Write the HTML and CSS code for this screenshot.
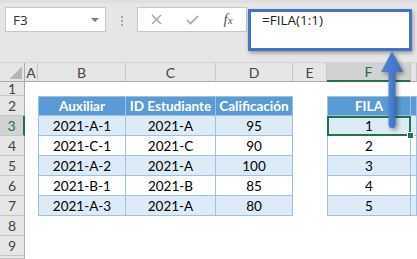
FILE: index.html
```html
<!DOCTYPE html>
<html lang="es">
<head>
    <meta charset="UTF-8">
    <title>FILA - Excel</title>
    <link rel="stylesheet" href="styles.css">
</head>
<body>
    <div class="app">
        <div class="toolbar">
            <div class="namebox"><span>F3</span><span class="caret"></span></div>
            <div class="grip"><i></i><i></i><i></i></div>
            <div class="fbuttons">
                <span class="slot">
                    <svg width="11" height="11" viewBox="0 0 11 11"><path d="M1 1L10 10M10 1L1 10" stroke="#a3a3a3" stroke-width="1.3" fill="none"/></svg>
                </span>
                <span class="slot">
                    <svg width="13" height="10" viewBox="0 0 13 10"><path d="M1 5L4.5 8.5L12 1" stroke="#a3a3a3" stroke-width="1.6" fill="none"/></svg>
                </span>
                <span class="slot fx">f<small>x</small></span>
            </div>
            <div class="formula">=FILA(1:1)</div>
        </div>

        <div class="sheet">
            <!-- encabezados de columna -->
            <div class="corner"><span></span></div>
            <div class="ch">A</div>
            <div class="ch">B</div>
            <div class="ch">C</div>
            <div class="ch">D</div>
            <div class="ch">E</div>
            <div class="ch sel">F</div>
            <div class="ch"></div>

            <div class="rh">1</div>
            <div></div><div></div><div></div><div></div><div></div><div></div><div></div>

            <div class="rh">2</div>
            <div></div>
            <div class="t th first">Auxiliar</div>
            <div class="t th">ID Estudiante</div>
            <div class="t th">Calificación</div>
            <div></div>
            <div class="t th first">FILA</div>
            <div class="t th"></div>

            <div class="rh sel">3</div>
            <div></div>
            <div class="t band first">2021-A-1</div>
            <div class="t band">2021-A</div>
            <div class="t band">95</div>
            <div></div>
            <div class="t band first active">1</div>
            <div class="t band"></div>

            <div class="rh">4</div>
            <div></div>
            <div class="t first">2021-C-1</div>
            <div class="t">2021-C</div>
            <div class="t">90</div>
            <div></div>
            <div class="t first">2</div>
            <div class="t"></div>

            <div class="rh">5</div>
            <div></div>
            <div class="t band first">2021-A-2</div>
            <div class="t band">2021-A</div>
            <div class="t band">100</div>
            <div></div>
            <div class="t band first">3</div>
            <div class="t band"></div>

            <div class="rh">6</div>
            <div></div>
            <div class="t first">2021-B-1</div>
            <div class="t">2021-B</div>
            <div class="t">85</div>
            <div></div>
            <div class="t first">4</div>
            <div class="t"></div>

            <div class="rh">7</div>
            <div></div>
            <div class="t band first">2021-A-3</div>
            <div class="t band">2021-A</div>
            <div class="t band">80</div>
            <div></div>
            <div class="t band first">5</div>
            <div class="t band"></div>

            <div class="rh">8</div>
            <div></div><div></div><div></div><div></div><div></div><div></div><div></div>

            <div class="rh">9</div>
            <div></div><div></div><div></div><div></div><div></div><div></div><div></div>

            <div class="rh"></div>
            <div></div><div></div><div></div><div></div><div></div><div></div><div></div>
        </div>

        <!-- flecha de F3 a la barra de fórmulas -->
        <svg class="arrow" width="32" height="86" viewBox="0 0 32 86">
            <defs>
                <linearGradient id="g" x1="0" x2="1">
                    <stop offset="0" stop-color="#4f86d6"/>
                    <stop offset="1" stop-color="#3f6ec2"/>
                </linearGradient>
            </defs>
            <rect x="12.5" y="20" width="7" height="60" rx="3.5" fill="url(#g)"/>
            <polygon points="16,3 5,24 27,24" fill="url(#g)"/>
        </svg>
    </div>
</body>
</html>
```

FILE: styles.css
```css
body {
    margin: 0;
    width: 417px;
    height: 259px;
    overflow: hidden;
    background-color: #fff;
    font-family: Lato, "Liberation Sans", sans-serif;
}

.app {
    position: relative;
}

/* barra superior */
.toolbar {
    display: flex;
    align-items: flex-start;
    height: 63px;
    box-sizing: border-box;
    padding: 4px 0 0 5px;
    background-color: #e6e6e6;
    border-top: 3px solid #dedede;
    border-bottom: 1px solid #d4d4d4;
    font-family: "Open Sans", sans-serif;
}

.namebox {
    width: 101px;
    height: 25px;
    box-sizing: border-box;
    display: flex;
    align-items: center;
    justify-content: space-between;
    padding: 0 6px 0 7px;
    background-color: #fff;
    border: 1px solid #c6c6c6;
    font-size: 13.5px;
    color: #333;
}

.caret {
    border-left: 4px solid transparent;
    border-right: 4px solid transparent;
    border-top: 4px solid #777;
}

.grip {
    width: 31px;
    display: flex;
    flex-direction: column;
    align-items: center;
    gap: 2px;
    padding-top: 9px;
}

.grip i {
    display: block;
    width: 2px;
    height: 2px;
    background-color: #a6a6a6;
}

.fbuttons {
    width: 110px;
    height: 25px;
    box-sizing: border-box;
    display: flex;
    align-items: center;
    background-color: #fff;
    border: 1px solid #c6c6c6;
}

.slot {
    width: 36px;
    display: flex;
    justify-content: center;
    align-items: center;
}

.fx {
    font-family: "Liberation Serif", serif;
    font-style: italic;
    font-size: 15px;
    color: #555;
}

.fx small {
    font-size: 11px;
}

.formula {
    width: 164px;
    height: 42px;
    box-sizing: border-box;
    margin: 2px 0 0 1px;
    padding-left: 11px;
    background-color: #fff;
    border: 3px solid #4472c4;
    box-shadow: 1px 2px 4px rgba(0, 0, 0, 0.35);
    font-size: 13.5px;
    line-height: 17px;
    color: #222;
}

/* hoja */
.sheet {
    display: grid;
    grid-template-columns: 25px 13px 88px 90px 77px 34px 84px 1fr;
    grid-template-rows: 19px 14px repeat(8, 20px) 3px;
    font-size: 13.5px;
    color: #000;
}

.sheet > div {
    box-sizing: border-box;
}

.corner,
.ch,
.rh {
    display: flex;
    align-items: center;
    justify-content: center;
    background-color: #e6e6e6;
    color: #444;
    font-size: 14px;
}

.corner {
    border-right: 1px solid #ababab;
    border-bottom: 1px solid #ababab;
    justify-content: flex-end;
    align-items: flex-end;
}

.corner span {
    width: 13px;
    height: 12px;
    margin: 0 2px 2px 0;
    background: linear-gradient(135deg, transparent 50%, #b7b7b7 50%);
}

.ch {
    border-right: 1px solid #c6c6c6;
    border-bottom: 1px solid #ababab;
}

.ch.sel {
    background-color: #d2d2d2;
    color: #217346;
    border-bottom: 2px solid #217346;
}

.rh {
    border-right: 1px solid #ababab;
    border-bottom: 1px solid #c6c6c6;
}

.rh.sel {
    background-color: #d2d2d2;
    color: #217346;
    border-right: 2px solid #217346;
}

/* tablas */
.t {
    display: flex;
    align-items: center;
    justify-content: center;
    border-right: 1px solid #9bc2e6;
    border-bottom: 1px solid #9bc2e6;
}

.t.first {
    border-left: 1px solid #9bc2e6;
}

.t.th {
    border-top: 1px solid #9bc2e6;
    background-color: #5b9bd5;
    color: #fff;
    font-weight: bold;
}

.t.band {
    background-color: #ddebf7;
}

.t.active {
    position: relative;
    outline: 2px solid #217346;
    outline-offset: -2px;
}

.t.active::after {
    content: "";
    position: absolute;
    right: -4px;
    bottom: -4px;
    width: 5px;
    height: 5px;
    background-color: #217346;
    border: 1px solid #fff;
}

.arrow {
    position: absolute;
    left: 376px;
    top: 48px;
    filter: drop-shadow(2px 2px 2px rgba(0, 0, 0, 0.4));
}
```
